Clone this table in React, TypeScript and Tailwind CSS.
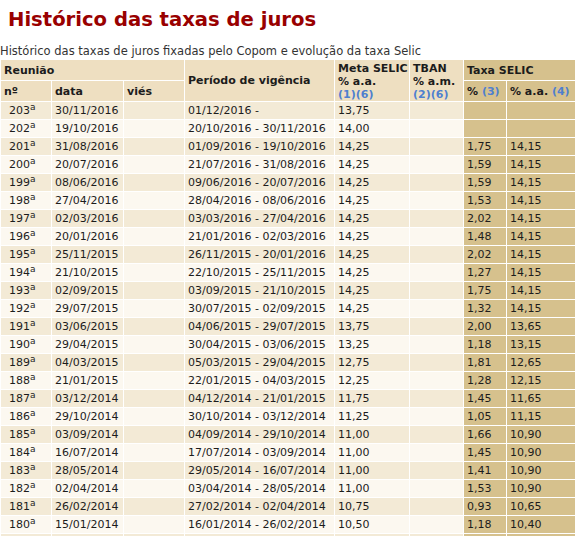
import React from "react";

const rows: [string, string, string, string, string, string, string][] = [
  ["203", "30/11/2016", "01/12/2016 -", "13,75", "", "", ""],
  ["202", "19/10/2016", "20/10/2016 - 30/11/2016", "14,00", "", "", ""],
  ["201", "31/08/2016", "01/09/2016 - 19/10/2016", "14,25", "", "1,75", "14,15"],
  ["200", "20/07/2016", "21/07/2016 - 31/08/2016", "14,25", "", "1,59", "14,15"],
  ["199", "08/06/2016", "09/06/2016 - 20/07/2016", "14,25", "", "1,59", "14,15"],
  ["198", "27/04/2016", "28/04/2016 - 08/06/2016", "14,25", "", "1,53", "14,15"],
  ["197", "02/03/2016", "03/03/2016 - 27/04/2016", "14,25", "", "2,02", "14,15"],
  ["196", "20/01/2016", "21/01/2016 - 02/03/2016", "14,25", "", "1,48", "14,15"],
  ["195", "25/11/2015", "26/11/2015 - 20/01/2016", "14,25", "", "2,02", "14,15"],
  ["194", "21/10/2015", "22/10/2015 - 25/11/2015", "14,25", "", "1,27", "14,15"],
  ["193", "02/09/2015", "03/09/2015 - 21/10/2015", "14,25", "", "1,75", "14,15"],
  ["192", "29/07/2015", "30/07/2015 - 02/09/2015", "14,25", "", "1,32", "14,15"],
  ["191", "03/06/2015", "04/06/2015 - 29/07/2015", "13,75", "", "2,00", "13,65"],
  ["190", "29/04/2015", "30/04/2015 - 03/06/2015", "13,25", "", "1,18", "13,15"],
  ["189", "04/03/2015", "05/03/2015 - 29/04/2015", "12,75", "", "1,81", "12,65"],
  ["188", "21/01/2015", "22/01/2015 - 04/03/2015", "12,25", "", "1,28", "12,15"],
  ["187", "03/12/2014", "04/12/2014 - 21/01/2015", "11,75", "", "1,45", "11,65"],
  ["186", "29/10/2014", "30/10/2014 - 03/12/2014", "11,25", "", "1,05", "11,15"],
  ["185", "03/09/2014", "04/09/2014 - 29/10/2014", "11,00", "", "1,66", "10,90"],
  ["184", "16/07/2014", "17/07/2014 - 03/09/2014", "11,00", "", "1,45", "10,90"],
  ["183", "28/05/2014", "29/05/2014 - 16/07/2014", "11,00", "", "1,41", "10,90"],
  ["182", "02/04/2014", "03/04/2014 - 28/05/2014", "11,00", "", "1,53", "10,90"],
  ["181", "26/02/2014", "27/02/2014 - 02/04/2014", "10,75", "", "0,93", "10,65"],
  ["180", "15/01/2014", "16/01/2014 - 26/02/2014", "10,50", "", "1,18", "10,40"],
];

const font = { fontFamily: '"DejaVu Sans", Verdana, sans-serif' };

export default function App() {
  return (
    <div className="w-[576px] h-[536px] overflow-hidden bg-white text-[#1c1c1c]" style={font}>
      <h1 className="pl-[8px] pt-[7px] h-[40px] text-[19.6px] leading-[26px] font-bold text-[#990000]">
        Histórico das taxas de juros
      </h1>
      <div className="h-[19px] pt-[4px] text-[11.5px] leading-[15px] text-[#333]">
        Histórico das taxas de juros fixadas pelo Copom e evolução da taxa Selic
      </div>
      <table className="table-fixed border-collapse w-[575px] text-[11px] leading-[13px]">
        <colgroup>
          <col className="w-[51px]" />
          <col className="w-[72px]" />
          <col className="w-[61px]" />
          <col className="w-[150px]" />
          <col className="w-[75px]" />
          <col className="w-[54px]" />
          <col className="w-[43px]" />
          <col className="w-[69px]" />
        </colgroup>
        <thead className="font-bold">
          <tr className="h-[21px]">
            <th colSpan={3} className="border border-white bg-[#EEDFC1] text-left align-middle pl-[3px]">Reunião</th>
            <th rowSpan={2} className="border border-white bg-[#EEDFC1] text-left align-middle pl-[3px]">Período de vigência</th>
            <th rowSpan={2} className="border border-white bg-[#EEDFC1] text-left align-top pl-[3px] pt-[2px]">
              Meta SELIC<br />% a.a.<br /><span className="text-[#4f7fcf]">(1)(6)</span>
            </th>
            <th rowSpan={2} className="border border-white bg-[#EEDFC1] text-left align-top pl-[3px] pt-[2px]">
              TBAN<br />% a.m.<br /><span className="text-[#4f7fcf]">(2)(6)</span>
            </th>
            <th colSpan={2} className="border border-white bg-[#D6C18D] text-left align-middle pl-[3px]">Taxa SELIC</th>
          </tr>
          <tr className="h-[21px]">
            <th className="border border-white bg-[#EEDFC1] text-left pl-[3px]">nº</th>
            <th className="border border-white bg-[#EEDFC1] text-left pl-[3px]">data</th>
            <th className="border border-white bg-[#EEDFC1] text-left pl-[3px]">viés</th>
            <th className="border border-white bg-[#D6C18D] text-left pl-[3px]">% <span className="text-[#4f7fcf]">(3)</span></th>
            <th className="border border-white bg-[#D6C18D] text-left pl-[3px]">% a.a. <span className="text-[#4f7fcf]">(4)</span></th>
          </tr>
        </thead>
        <tbody>
          {rows.map((r, i) => {
            const bg = i % 2 === 0 ? "bg-[#F3EAD6]" : "bg-[#FCF8F0]";
            return (
              <tr key={r[0]} className="h-[18px]">
                <td className={`border border-white ${bg} pl-[8px]`}>
                  {r[0]}<span className="text-[9px] leading-[9px] relative top-[-4px]">a</span>
                </td>
                <td className={`border border-white ${bg} pl-[3px]`}>{r[1]}</td>
                <td className={`border border-white ${bg} pl-[3px]`}></td>
                <td className={`border border-white ${bg} pl-[3px] whitespace-nowrap`}>{r[2]}</td>
                <td className={`border border-white ${bg} pl-[3px]`}>{r[3]}</td>
                <td className={`border border-white ${bg} pl-[3px]`}>{r[4]}</td>
                <td className="border border-white bg-[#D6C18D] pl-[3px]">{r[5]}</td>
                <td className="border border-white bg-[#D6C18D] pl-[3px]">{r[6]}</td>
              </tr>
            );
          })}
          <tr className="h-[18px]">
            <td className="border border-white bg-[#F3EAD6]"></td>
            <td className="border border-white bg-[#F3EAD6]"></td>
            <td className="border border-white bg-[#F3EAD6]"></td>
            <td className="border border-white bg-[#F3EAD6]"></td>
            <td className="border border-white bg-[#F3EAD6]"></td>
            <td className="border border-white bg-[#F3EAD6]"></td>
            <td className="border border-white bg-[#D6C18D]"></td>
            <td className="border border-white bg-[#D6C18D]"></td>
          </tr>
        </tbody>
      </table>
    </div>
  );
}
